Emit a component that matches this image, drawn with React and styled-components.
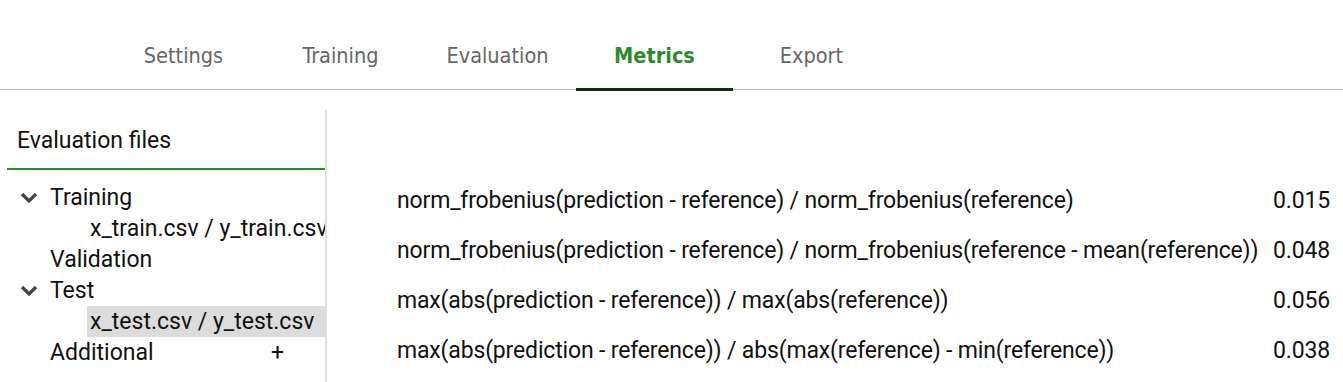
import React from 'react';
import styled, { createGlobalStyle } from 'styled-components';

const GlobalStyle = createGlobalStyle`
  html, body {
    margin: 0;
    padding: 0;
    background: #fff;
  }
  body {
    font-family: Roboto, "Liberation Sans", sans-serif;
    color: #111;
  }
`

const tabs = ['Settings', 'Training', 'Evaluation', 'Metrics', 'Export']

const metrics = [
  { name: 'norm_frobenius(prediction - reference) / norm_frobenius(reference)', value: '0.015' },
  { name: 'norm_frobenius(prediction - reference) / norm_frobenius(reference - mean(reference))', value: '0.048' },
  { name: 'max(abs(prediction - reference)) / max(abs(reference))', value: '0.056' },
  { name: 'max(abs(prediction - reference)) / abs(max(reference) - min(reference))', value: '0.038' },
]

const Page = styled.div`
  width: 1343px;
  height: 382px;
  overflow: hidden;
`

const TabBar = styled.nav`
  display: flex;
  padding-left: 105px;
  height: 90px;
  border-bottom: 1px solid #b3b3b3;
  box-sizing: border-box;
  align-items: stretch;
`

const Tab = styled.div`
  width: 157px;
  display: flex;
  align-items: center;
  justify-content: center;
  padding-top: 23px;
  box-sizing: border-box;
  font-family: "DejaVu Sans", sans-serif;
  font-stretch: condensed;
  font-size: 21.5px;
  font-weight: ${p => (p.$active ? 700 : 400)};
  color: ${p => (p.$active ? '#2f8a2a' : '#666')};
  border-bottom: 3px solid ${p => (p.$active ? '#142a14' : 'transparent')};
  margin-bottom: -2px;
`

const Body = styled.div`
  display: flex;
  padding-top: 20px;
`

const Sidebar = styled.aside`
  width: 327px;
  height: 272px;
  border-right: 2px solid #e0e0e0;
  padding-left: 7px;
  box-sizing: border-box;
  overflow: hidden;
`

const SideTitle = styled.div`
  height: 60px;
  padding: 3px 0 0 10px;
  display: flex;
  align-items: center;
  font-size: 23px;
  border-bottom: 2px solid #2a8a2a;
  box-sizing: border-box;
`

const Tree = styled.ul`
  list-style: none;
  margin: 12px 0 0 0;
  padding: 0;
`

const Row = styled.li`
  height: 31px;
  display: flex;
  align-items: center;
  font-size: 23px;
  white-space: nowrap;
  padding-left: ${p => p.$depth * 40 + 43}px;
  position: relative;
  background: ${p => (p.$selected ? '#dcdcdc' : 'transparent')};
  margin-left: ${p => (p.$selected ? 80 : 0)}px;
  ${p => p.$selected && `padding-left: 3px;`}
`

const Chevron = styled.svg`
  position: absolute;
  left: 13px;
  top: 10px;
  width: 18px;
  height: 12px;
`

const Plus = styled.span`
  margin-left: auto;
  margin-right: 41px;
  font-size: 23px;
`

const Main = styled.main`
  flex: 1;
  padding: 65px 13px 0 70px;
`

const MetricRow = styled.div`
  height: 50px;
  display: flex;
  align-items: center;
  justify-content: space-between;
  gap: 8px;
  font-size: 23px;
  letter-spacing: -0.16px;
  white-space: nowrap;
  color: #111;
`

const ChevronIcon = () => (
  <Chevron viewBox="0 0 18 12">
    <path d="M2 2 L9 9 L16 2" fill="none" stroke="#444" strokeWidth="3.2" />
  </Chevron>
)

export default function App() {
  return (
    <Page>
      <GlobalStyle />
      <TabBar>
        {tabs.map(t => (
          <Tab key={t} $active={t === 'Metrics'}>{t}</Tab>
        ))}
      </TabBar>
      <Body>
        <Sidebar>
          <SideTitle>Evaluation files</SideTitle>
          <Tree>
            <Row $depth={0}><ChevronIcon />Training</Row>
            <Row $depth={1}>x_train.csv / y_train.csv</Row>
            <Row $depth={0}>Validation</Row>
            <Row $depth={0}><ChevronIcon />Test</Row>
            <Row $depth={1} $selected>x_test.csv / y_test.csv</Row>
            <Row $depth={0}>Additional<Plus>+</Plus></Row>
          </Tree>
        </Sidebar>
        <Main>
          {metrics.map(m => (
            <MetricRow key={m.name}>
              <span>{m.name}</span>
              <span>{m.value}</span>
            </MetricRow>
          ))}
        </Main>
      </Body>
    </Page>
  )
}
